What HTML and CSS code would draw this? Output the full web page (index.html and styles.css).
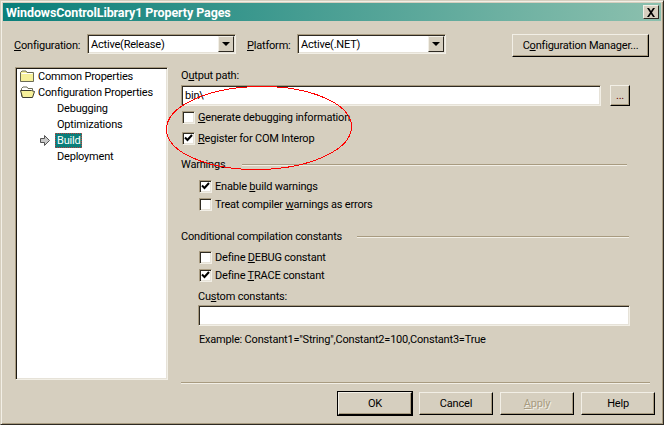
FILE: index.html
```html
<!DOCTYPE html>
<html lang="en">
<head>
    <meta charset="UTF-8">
    <title>WindowsControlLibrary1 Property Pages</title>
    <link rel="stylesheet" href="styles.css">
</head>
<body>
<div class="window">
    <div class="titlebar">
        <span class="title">WindowsControlLibrary1 Property Pages</span>
        <span class="close-btn">
            <svg width="10" height="9" viewBox="0 0 10 9"><path d="M1 0h2l2 3 2-3h2L6 4.500 9 9H7L5 6 3 9H1l3-4.500z" fill="#000"/></svg>
        </span>
    </div>

    <div class="config-row">
        <span class="config-label"><u>C</u>onfiguration:</span>
        <div class="combo combo-config">
            <span class="combo-text">Active(Release)</span>
            <span class="combo-btn"><i class="arrow-down"></i></span>
        </div>
        <span class="platform-label"><u>P</u>latform:</span>
        <div class="combo combo-platform">
            <span class="combo-text">Active(.NET)</span>
            <span class="combo-btn"><i class="arrow-down"></i></span>
        </div>
        <button class="btn btn-manager">C<u>o</u>nfiguration Manager...</button>
    </div>

    <div class="main">
        <div class="tree">
            <div class="tree-row">
                <svg class="folder" width="14" height="12" viewBox="0 0 14 12"><path d="M.5 2.500 2 1h4l1 1.500h6.500v9H.5z" fill="#f6f09a" stroke="#6b6b55"/><path d="M1.500 3.500h11" stroke="#fff"/></svg>
                <span>Common Properties</span>
            </div>
            <div class="tree-row">
                <svg class="folder" width="16" height="12" viewBox="0 0 16 12"><path d="M1.500 10.500v-8L3 1h4l1 1.500h4.500v2" fill="#fff" stroke="#6b6b55"/><path d="M.5 4.500h11l3 1-2 6H2.500z" fill="#f6f09a" stroke="#3c3c30"/></svg>
                <span>Configuration Properties</span>
            </div>
            <div class="tree-row tree-child">Debugging</div>
            <div class="tree-row tree-child">Optimizations</div>
            <div class="tree-row tree-child">
                <svg class="pointer" width="10" height="11" viewBox="0 0 10 11"><path d="M.5 3.500h4V.5l5 5-5 5v-3h-4z" fill="#c8c8c8" stroke="#555"/></svg>
                <span class="selected">Build</span>
            </div>
            <div class="tree-row tree-child">Deployment</div>
        </div>

        <div class="pane">
            <div class="label-output">O<u>u</u>tput path:</div>
            <div class="path-row">
                <div class="textbox path-box">bin\</div>
                <button class="btn btn-browse">...</button>
            </div>
            <div class="check-row check-first">
                <span class="check"></span><span><u>G</u>enerate debugging information</span>
            </div>
            <div class="check-row check-second">
                <span class="check checked"><svg width="9" height="8" viewBox="0 0 9 8"><path d="M1 3.500l2.500 2.500L8 1" fill="none" stroke="#000" stroke-width="2"/></svg></span><span><u>R</u>egister for COM Interop</span>
            </div>

            <div class="group-head group-warnings">
                <span>Warnings</span><span class="rule rule-warnings"></span>
            </div>
            <div class="check-row indent">
                <span class="check checked"><svg width="9" height="8" viewBox="0 0 9 8"><path d="M1 3.500l2.500 2.500L8 1" fill="none" stroke="#000" stroke-width="2"/></svg></span><span>Enable <u>b</u>uild warnings</span>
            </div>
            <div class="check-row indent">
                <span class="check"></span><span>Treat compiler <u>w</u>arnings as errors</span>
            </div>

            <div class="group-head group-constants">
                <span>Conditional compilation constants</span><span class="rule rule-constants"></span>
            </div>
            <div class="check-row indent first-constant">
                <span class="check"></span><span>Define <u>D</u>EBUG constant</span>
            </div>
            <div class="check-row indent">
                <span class="check checked"><svg width="9" height="8" viewBox="0 0 9 8"><path d="M1 3.500l2.500 2.500L8 1" fill="none" stroke="#000" stroke-width="2"/></svg></span><span>Define <u>T</u>RACE constant</span>
            </div>
            <div class="label-custom">Cu<u>s</u>tom constants:</div>
            <div class="textbox custom-box"></div>
            <div class="example">Example: Constant1="String",Constant2=100,Constant3=True</div>
        </div>
    </div>

    <div class="separator"></div>

    <div class="footer">
        <button class="btn btn-foot btn-default">OK</button>
        <button class="btn btn-foot">Cancel</button>
        <button class="btn btn-foot btn-disabled"><u>A</u>pply</button>
        <button class="btn btn-foot">Help</button>
    </div>

    <!-- hand drawn red ring over the two checkboxes -->
    <svg class="ring" width="190" height="88" viewBox="0 0 190 88">
        <ellipse cx="95" cy="44" rx="92.500" ry="41.500" transform="rotate(-1 95 44)" fill="none" stroke="#f00" stroke-width="1" shape-rendering="crispEdges"/>
    </svg>
</div>
</body>
</html>
```

FILE: styles.css
```css
* {
    margin: 0;
    padding: 0;
    box-sizing: border-box;
}

body {
    width: 664px;
    height: 425px;
    overflow: hidden;
    background: #d6cfbf;
    font-family: Roboto, "Liberation Sans", Arial, sans-serif;
    font-size: 11px;
    letter-spacing: -0.2px;
    color: #000;
}

.window {
    position: relative;
    width: 664px;
    height: 425px;
    padding: 3px;
    background: #d6cfbf;
    border-left: 1px solid #d6cfbf;
    border-top: 1px solid #d6cfbf;
    border-right: 1px solid #2e2a22;
    border-bottom: 1px solid #2e2a22;
    box-shadow: inset 1px 1px 0 #f2efe6, inset -1px -1px 0 #a89b80;
}

/* Title bar */
.titlebar {
    display: flex;
    align-items: center;
    justify-content: space-between;
    height: 18px;
    margin: -1px -1px 0 -1px;
    padding: 0 2px 0 3px;
    background: linear-gradient(to right, #0a7f7a, #8cc0ae);
}

.title {
    color: #fff;
    font-weight: bold;
    font-size: 12.5px;
    letter-spacing: -0.1px;
}

.close-btn {
    display: flex;
    align-items: center;
    justify-content: center;
    width: 16px;
    height: 14px;
    background: #d6cfbf;
    border: 1px solid;
    border-color: #f2efe6 #2e2a22 #2e2a22 #f2efe6;
}

/* Configuration row */
.config-row {
    display: flex;
    align-items: flex-start;
    height: 23px;
    margin-top: 13px;
    padding-left: 10px;
}

.config-label {
    width: 73px;
    padding-top: 5px;
}

.platform-label {
    width: 50px;
    margin-left: 11px;
    padding-top: 5px;
}

.combo {
    display: flex;
    align-items: center;
    justify-content: space-between;
    width: 149px;
    height: 20px;
    padding: 1px;
    background: #fff;
    border: 1px solid;
    border-color: #a89b80 #f2efe6 #f2efe6 #a89b80;
    box-shadow: inset 1px 1px 0 #2e2a22, inset -1px -1px 0 #e6e2d8;
}

.combo-text {
    padding-left: 2px;
}

.combo-btn {
    display: flex;
    align-items: center;
    justify-content: center;
    width: 16px;
    height: 16px;
    background: #d6cfbf;
    border: 1px solid;
    border-color: #f2efe6 #2e2a22 #2e2a22 #f2efe6;
}

.arrow-down {
    display: block;
    width: 0;
    height: 0;
    border-left: 4px solid transparent;
    border-right: 4px solid transparent;
    border-top: 4px solid #000;
}

.btn {
    font-family: inherit;
    font-size: inherit;
    letter-spacing: inherit;
    color: #000;
    background: #d6cfbf;
    border: 1px solid;
    border-color: #f2efe6 #000 #000 #f2efe6;
    box-shadow: inset -1px -1px 0 #a89b80;
}

.btn-manager {
    width: 137px;
    height: 23px;
    margin-left: 66px;
}

/* Main area */
.main {
    display: flex;
    margin-top: 10px;
    height: 313px;
}

.tree {
    width: 153px;
    height: 313px;
    margin-left: 11px;
    padding: 0 1px 1px;
    background: #fff;
    border: 1px solid;
    border-color: #a89b80 #f2efe6 #f2efe6 #a89b80;
    box-shadow: inset 1px 1px 0 #1d1a14, inset -1px -1px 0 #e6e2d8;
}

.tree-row {
    position: relative;
    display: flex;
    align-items: center;
    height: 16px;
    padding-left: 21px;
    white-space: nowrap;
}

.tree-child {
    padding-left: 40px;
}

.folder {
    position: absolute;
    left: 3px;
    top: 2px;
}

.pointer {
    position: absolute;
    left: 23px;
    top: 3px;
}

.selected {
    margin-left: -2px;
    padding: 1px 2px;
    color: #fff;
    background: #0a7f7a;
    outline: 1px dotted #c04040;
    outline-offset: -1px;
}

.pane {
    width: 469px;
    margin-left: 13px;
}

.label-output {
    height: 14px;
    margin-top: 2px;
}

.path-row {
    display: flex;
    height: 21px;
    margin-top: 2px;
}

.textbox {
    height: 21px;
    padding: 1px 0 0 3px;
    line-height: 17px;
    background: #fff;
    border: 1px solid;
    border-color: #a89b80 #f2efe6 #f2efe6 #a89b80;
    box-shadow: inset 1px 1px 0 #2e2a22, inset -1px -1px 0 #e6e2d8;
}

.path-box {
    width: 420px;
}

.btn-browse {
    width: 20px;
    height: 21px;
    margin-left: 9px;
    color: #600;
}

.check-row {
    display: flex;
    align-items: center;
    gap: 3px;
    height: 18px;
}

.check-first {
    margin-top: 2px;
}

.check-second {
    margin-top: 3px;
}

.indent {
    padding-left: 17px;
}

.check {
    display: flex;
    align-items: center;
    justify-content: center;
    width: 13px;
    height: 13px;
    margin-left: 1px;
    background: #fff;
    border: 1px solid;
    border-color: #a89b80 #f2efe6 #f2efe6 #a89b80;
    box-shadow: inset 1px 1px 0 #2e2a22, inset -1px -1px 0 #e6e2d8;
}

.checked svg {
    display: block;
}

.group-head {
    display: flex;
    align-items: center;
    height: 14px;
}

.group-warnings {
    margin-top: 10px;
    margin-bottom: 6px;
}

.group-constants {
    margin-top: 16px;
}

.rule {
    flex: 1;
    height: 1px;
    background: #a89b80;
    box-shadow: 0 1px 0 #f2efe6;
}

.rule-warnings {
    margin-left: 17px;
    margin-right: 23px;
}

.rule-constants {
    margin-left: 15px;
    margin-right: 21px;
}

.first-constant {
    margin-top: 5px;
}

.label-custom {
    height: 14px;
    margin-top: 6px;
    margin-left: 17px;
}

.custom-box {
    width: 432px;
    margin-top: 1px;
    margin-left: 17px;
}

.example {
    margin-top: 7px;
    margin-left: 18px;
}

/* Bottom buttons */
.separator {
    height: 1px;
    margin: 2px 10px 0 177px;
    background: #a89b80;
    box-shadow: 0 1px 0 #f2efe6;
}

.footer {
    display: flex;
    justify-content: flex-end;
    gap: 7px;
    margin-top: 9px;
    padding-right: 5px;
}

.btn-foot {
    width: 74px;
    height: 23px;
}

.btn-default {
    outline: 1px solid #000;
}

.btn-disabled {
    color: #a89b80;
    text-shadow: 1px 1px 0 #f2efe6;
}

.ring {
    position: absolute;
    left: 163px;
    top: 83px;
}
```
